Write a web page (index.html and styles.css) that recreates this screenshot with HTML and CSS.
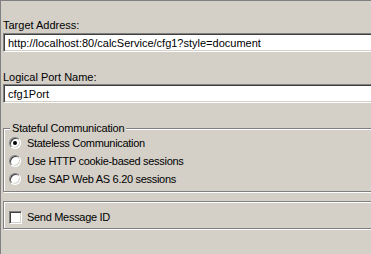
FILE: index.html
```html
<!DOCTYPE html>
<html lang="en">
<head>
    <meta charset="UTF-8">
    <title>Web Service Configuration</title>
    <link rel="stylesheet" href="styles.css">
</head>
<body>
    <div class="panel">
        <label class="field-label first" for="target">Target Address:</label>
        <input class="field" id="target" type="text" value="http://localhost:80/calcService/cfg1?style=document">

        <label class="field-label second" for="port">Logical Port Name:</label>
        <input class="field" id="port" type="text" value="cfg1Port">

        <div class="group stateful">
            <span class="legend">Stateful Communication</span>
            <div class="option"><span class="radio checked"></span>Stateless Communication</div>
            <div class="option"><span class="radio"></span>Use HTTP cookie-based sessions</div>
            <div class="option"><span class="radio"></span>Use SAP Web AS 6.20 sessions</div>
        </div>

        <div class="group message">
            <div class="option"><span class="check"></span>Send Message ID</div>
        </div>
    </div>
</body>
</html>
```

FILE: styles.css
```css
html, body {
    margin: 0;
    overflow: hidden;
}
body {
    font-family: "Liberation Sans", Arial, sans-serif;
    font-size: 11px;
    color: #000;
    background: #d4d0c8;
}
.panel {
    height: 254px;
    box-sizing: border-box;
    border-top: 1px solid #808080;
    border-left: 1px solid #808080;
    padding-left: 2px;
    display: flex;
    flex-direction: column;
}
.field-label {
    display: block;
    line-height: 13px;
}
.field-label.first {
    margin-top: 18px;
    margin-bottom: 1px;
}
.field-label.second {
    margin-top: 19px;
}
.field {
    display: block;
    height: 19px;
    margin: 0 -6px 0 0;
    padding: 0 0 0 4px;
    box-sizing: border-box;
    font: inherit;
    color: #000;
    background: #fff;
    border: 1px solid;
    border-color: #808080 #fff #fff #808080;
    box-shadow: inset 1px 1px #404040, inset -1px -1px #d4d0c8;
    outline: none;
}
.group {
    position: relative;
    margin-right: -10px;
    border: 1px solid #808080;
    box-shadow: inset 1px 1px #fff, 1px 1px #fff;
    padding-left: 5px;
}
.stateful {
    margin-top: 25px;
    padding-top: 5px;
    padding-bottom: 3px;
}
.message {
    margin-top: 9px;
    padding-top: 6px;
    padding-bottom: 2px;
}
.legend {
    position: absolute;
    left: 6px;
    top: -7px;
    padding: 0 2px;
    line-height: 13px;
    letter-spacing: -0.2px;
    background: #d4d0c8;
}
.option {
    display: flex;
    align-items: center;
    height: 18px;
    letter-spacing: -0.3px;
}
.radio {
    width: 10px;
    height: 10px;
    margin-right: 6px;
    border: 1px solid;
    border-color: #808080 #fff #fff #808080;
    border-radius: 50%;
    background: #fff;
    box-shadow: inset 1px 1px #404040, inset -1px -1px #d4d0c8;
    display: flex;
    align-items: center;
    justify-content: center;
}
.radio.checked::after {
    content: "";
    width: 4px;
    height: 4px;
    border-radius: 50%;
    background: #000;
}
.check {
    width: 11px;
    height: 11px;
    margin-right: 5px;
    border: 1px solid;
    border-color: #808080 #fff #fff #808080;
    background: #fff;
    box-shadow: inset 1px 1px #404040, inset -1px -1px #d4d0c8;
}
```
